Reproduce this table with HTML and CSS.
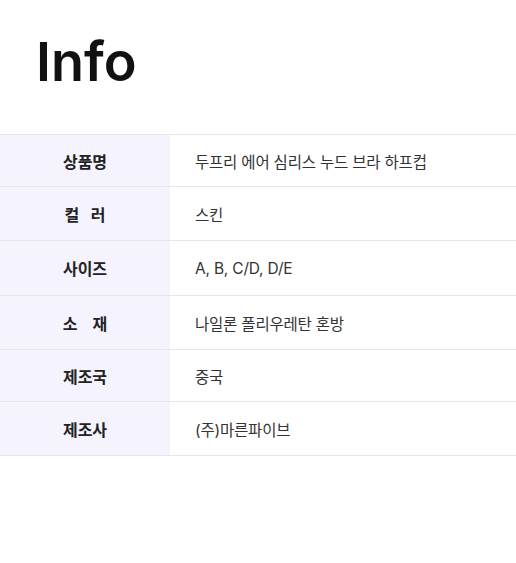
FILE: index.html
```html
<!DOCTYPE html>
<html lang="ko">
<head>
<meta charset="utf-8">
<link rel="stylesheet" href="styles.css">
</head>
<body>
<section class="info">
  <h1 class="title">Info</h1>
  <div class="table">
    <div class="row h52"><div class="label">상품명</div><div class="value">두프리 에어 심리스 누드 브라 하프컵</div></div>
    <div class="row h54"><div class="label">컬&nbsp;&nbsp;&nbsp;러</div><div class="value">스킨</div></div>
    <div class="row h55"><div class="label">사이즈</div><div class="value">A, B, C/D, D/E</div></div>
    <div class="row h54"><div class="label">소&nbsp;&nbsp;&nbsp;&nbsp;재</div><div class="value">나일론 폴리우레탄 혼방</div></div>
    <div class="row h52"><div class="label">제조국</div><div class="value">중국</div></div>
    <div class="row h54"><div class="label">제조사</div><div class="value">(주)마른파이브</div></div>
  </div>
</section>
</body>
</html>
```

FILE: styles.css
```css
* { box-sizing: border-box; }
html, body { margin: 0; padding: 0; background: #fff; }
body { font-family: Inter, "Noto Sans CJK KR", sans-serif; color: #222; }
.info { padding-top: 27px; }
.title {
  margin: 0 0 0 36px;
  font-family: Inter, "Noto Sans", sans-serif;
  font-weight: 600;
  font-size: 54px;
  line-height: 70px;
  letter-spacing: 0;
  color: #111;
}
.table { margin-top: 37px; border-top: 1px solid #e6e6e9; }
.row { display: flex; border-bottom: 1px solid #e6e6e9; }
.h52 { height: 52px; }
.h54 { height: 54px; }
.h55 { height: 55px; }
.label {
  width: 170px;
  flex: none;
  background: #f5f3fe;
  display: flex; align-items: center; justify-content: center;
  font-weight: 700;
  font-size: 16px;
  color: #222;
  white-space: pre;
}
.value {
  flex: 1;
  display: flex; align-items: center;
  padding-left: 25px;
  font-size: 15.5px;
  color: #333;
  letter-spacing: -0.2px;
}
```
